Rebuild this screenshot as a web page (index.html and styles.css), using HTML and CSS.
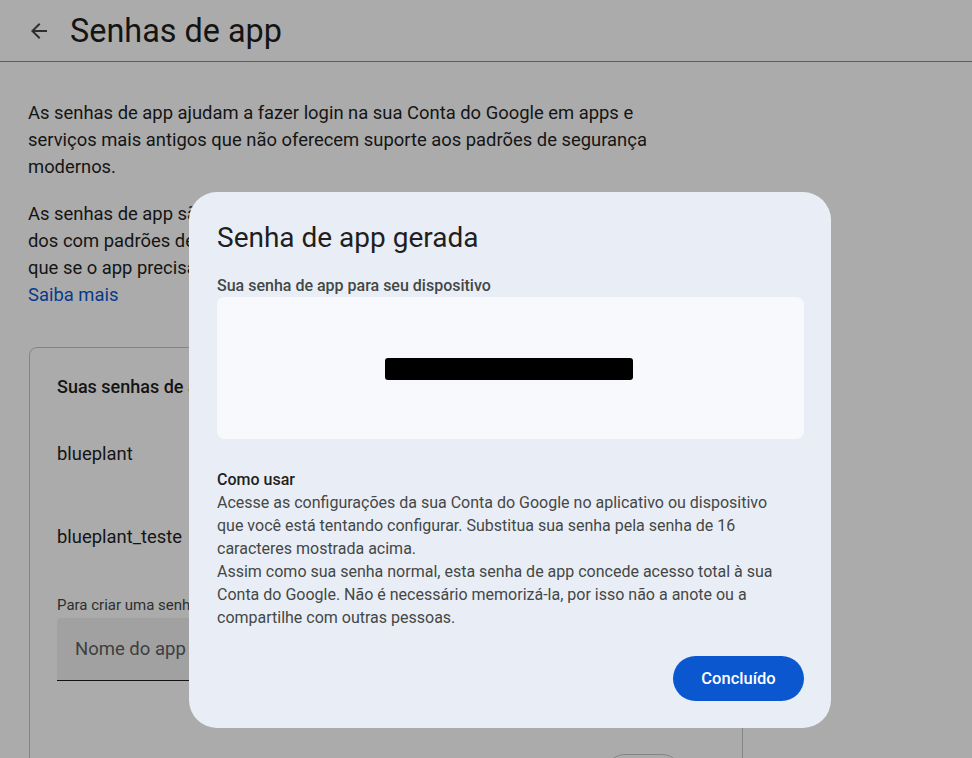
FILE: index.html
```html
<!DOCTYPE html>
<html lang="pt-BR">
<head>
<meta charset="utf-8">
<title>Senhas de app</title>
<link rel="stylesheet" href="styles.css">
</head>
<body>
<div class="page">
  <header class="topbar">
    <span class="back" aria-label="Voltar">
      <svg width="24" height="24" viewBox="0 0 24 24"><path d="M20 11H7.83l5.59-5.59L12 4l-8 8 8 8 1.41-1.41L7.83 13H20v-2z" fill="#444746"/></svg>
    </span>
    <h1 class="title">Senhas de app</h1>
  </header>
  <main class="content">
    <p class="para">As senhas de app ajudam a fazer login na sua Conta do Google em apps e serviços mais antigos que não oferecem suporte aos padrões de segurança modernos.</p>
    <p class="para">As senhas de app são menos seguras do que usar apps e serviços atualiza-<br>dos com padrões de segurança modernos. Antes de criar uma, confirme<br>que se o app precisa dela para fazer login.<br><a class="link" href="#">Saiba mais</a></p>
    <section class="card">
      <h2 class="card-title">Suas senhas de app</h2>
      <div class="row first">blueplant</div>
      <div class="row second">blueplant_teste</div>
      <p class="hint">Para criar uma senha de app para um novo app ou serviço, digite um nome abaixo.</p>
      <div class="input"><span class="placeholder">Nome do app</span></div>
      <div class="actions"><span class="outline-btn">Criar</span></div>
    </section>
  </main>
</div>
<div class="scrim"></div>
<div class="dialog" role="dialog">
  <h2 class="dlg-title">Senha de app gerada</h2>
  <div class="dlg-label">Sua senha de app para seu dispositivo</div>
  <div class="pw-box"><span class="redact"></span></div>
  <div class="howto">
    <div class="howto-title">Como usar</div>
    <p class="howto-text">Acesse as configurações da sua Conta do Google no aplicativo ou dispositivo que você está tentando configurar. Substitua sua senha pela senha de 16 caracteres mostrada acima.<br>Assim como sua senha normal, esta senha de app concede acesso total à sua Conta do Google. Não é necessário memorizá-la, por isso não a anote ou a compartilhe com outras pessoas.</p>
  </div>
  <div class="dlg-actions"><button class="done">Concluído</button></div>
</div>
</body>
</html>
```
FILE: styles.css
```css
* { box-sizing: border-box; }
html, body { margin: 0; padding: 0; }
body {
  width: 972px;
  height: 758px;
  overflow: hidden;
  background: #ffffff;
  font-family: Roboto, "Noto Sans", Arial, sans-serif;
  color: #1f1f1f;
  position: relative;
}
.topbar {
  height: 62px;
  border-bottom: 1px solid #8a8a8a;
  display: flex;
  align-items: center;
  padding-left: 27px;
}
.back { width: 24px; height: 24px; display: flex; }
.title {
  margin: 0 0 0 19px;
  font-size: 32.4px;
  font-weight: 400;
  color: #1f1f1f;
  line-height: 40px;
}
.content { padding: 37px 0 0 28px; }
.para {
  margin: 0 0 20px 0;
  width: 640px;
  font-size: 18.4px;
  line-height: 27px;
  color: #1f1f1f;
}
.link { color: #0b57d0; text-decoration: none; }
.card {
  margin: 39px 0 0 1px;
  width: 714px;
  height: 460px;
  border: 1px solid #c4c7c5;
  border-radius: 8px;
  padding: 27px 27px 0 27px;
}
.card-title { margin: 0; font-size: 18px; font-weight: 500; line-height: 24px; color: #1f1f1f; }
.row { font-size: 18.4px; line-height: 24px; color: #1f1f1f; }
.row.first { margin-top: 43px; }
.row.second { margin-top: 59px; }
.hint { margin: 46px 0 0 0; font-size: 15px; line-height: 20px; color: #444746; }
.input {
  margin-top: 3px;
  height: 63px;
  width: 600px;
  background: #f0f1f1;
  border-bottom: 1px solid #1f1f1f;
  border-radius: 4px 4px 0 0;
  display: flex;
  align-items: center;
  padding-left: 18px;
}
.placeholder { font-size: 18.5px; color: #5e5e5e; }
.actions { display: flex; justify-content: flex-end; padding-right: 33px; margin-top: 73px; }
.outline-btn {
  width: 77px; height: 40px; border: 1px solid #c4c7c5; border-radius: 20px;
  font-size: 14px; color: #0b57d0; display: flex; align-items: center; justify-content: center;
}
.scrim { position: absolute; inset: 0; background: rgba(0,0,0,0.33); }
.dialog {
  position: absolute;
  left: 189px; top: 192px;
  width: 642px; height: 536px;
  background: #e9eef6;
  border-radius: 28px;
  padding: 29px 27px 27px 28px;
  display: flex;
  flex-direction: column;
}
.dlg-title { margin: 0; font-size: 28px; font-weight: 400; line-height: 34px; color: #1f1f1f; }
.dlg-label { margin-top: 21px; font-size: 16px; font-weight: 500; line-height: 20px; color: #444746; }
.pw-box {
  margin-top: 1px;
  height: 142px;
  background: #f8f9fd;
  border-radius: 8px;
  position: relative;
}
.redact {
  position: absolute;
  left: 168px; top: 61px;
  width: 248px; height: 22px;
  background: #000;
  border-radius: 3px;
}
.howto { margin-top: 29px; }
.howto-title { font-size: 16px; font-weight: 500; line-height: 23px; color: #1f1f1f; }
.howto-text { margin: 0; width: 568px; font-size: 16px; line-height: 23px; color: #444746; }
.dlg-actions { margin-top: auto; display: flex; justify-content: flex-end; }
.done {
  width: 131px; height: 45px;
  border: none; border-radius: 23px;
  background: #0b57d0; color: #fff;
  font-family: Roboto, Arial, sans-serif;
  font-size: 16.5px; font-weight: 500;
}
```
